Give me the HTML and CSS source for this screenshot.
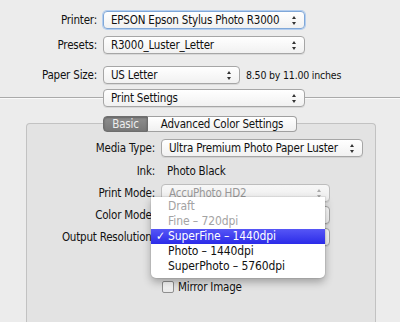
FILE: index.html
```html
<!DOCTYPE html>
<html>
<head>
	<meta charset="UTF-8">
	<title>Print</title>
	<link rel="stylesheet" href="styles.css">
</head>
<body>
	<div class="sheet">
		<div class="row first">
			<div class="label">Printer:</div>
			<div class="popup wide focus"><span>EPSON Epson Stylus Photo R3000</span><i class="arrows"></i></div>
		</div>
		<div class="row presets">
			<div class="label">Presets:</div>
			<div class="popup wide"><span>R3000_Luster_Letter</span><i class="arrows"></i></div>
		</div>
		<div class="row paper">
			<div class="label">Paper Size:</div>
			<div class="popup narrow"><span>US Letter</span><i class="arrows"></i></div>
			<div class="note">8.50 by 11.00 inches</div>
		</div>
		<div class="divider">
			<div class="rule left"></div>
			<div class="popup wide"><span>Print Settings</span><i class="arrows"></i></div>
			<div class="rule right"></div>
		</div>
	</div>
	<div class="pane">
		<div class="tabs">
			<div class="tab selected">Basic</div>
			<div class="tab">Advanced Color Settings</div>
		</div>
		<div class="prow media-row">
			<div class="plabel">Media Type:</div>
			<div class="popup media"><span>Ultra Premium Photo Paper Luster</span><i class="arrows"></i></div>
		</div>
		<div class="prow ink">
			<div class="plabel">Ink:</div>
			<div class="value">Photo Black</div>
		</div>
		<div class="prow mode-row">
			<div class="plabel">Print Mode:</div>
			<div class="popup mode disabled"><span>AccuPhoto HD2</span><i class="arrows"></i></div>
		</div>
		<div class="prow">
			<div class="plabel">Color Mode:</div>
			<div class="popup mode"><span></span><i class="arrows"></i></div>
		</div>
		<div class="prow">
			<div class="plabel">Output Resolution:</div>
			<div class="popup mode"><span></span><i class="arrows"></i></div>
		</div>
		<div class="prow check">
			<div class="plabel"></div>
			<div class="box"></div>
			<div class="value">Mirror Image</div>
		</div>

		<div class="menu">
			<div class="item off">Draft</div>
			<div class="item off">Fine – 720dpi</div>
			<div class="item on"><b class="tick">✓</b>SuperFine – 1440dpi</div>
			<div class="item">Photo – 1440dpi</div>
			<div class="item">SuperPhoto – 5760dpi</div>
		</div>
	</div>
</body>
</html>
```

FILE: styles.css
```css
body {
	margin: 0;
	padding: 0;
	background-color: #ececec;
	font-family: "DejaVu Sans Condensed", "DejaVu Sans", sans-serif;
	font-size: 11.5px;
	letter-spacing: -0.2px;
	color: #111;
	overflow: hidden;
	height: 322px;
}
.sheet {
	padding-top: 11px;
}
.row {
	display: flex;
	align-items: center;
	height: 18px;
}
.row.presets {
	margin-top: 7px;
}
.row.paper {
	margin-top: 12px;
	margin-bottom: 5px;
}
.label {
	width: 97px;
	text-align: right;
	padding-right: 6px;
}
.popup {
	box-sizing: border-box;
	height: 18px;
	display: flex;
	align-items: center;
	justify-content: space-between;
	padding: 0 7px 0 7px;
	border: 1px solid #a6a6a6;
	border-radius: 4px;
	background: linear-gradient(#ffffff, #f1f1f1);
	box-shadow: 0 1px 0 rgba(0,0,0,0.08);
	white-space: nowrap;
}
.popup.wide {
	width: 202px;
}
.popup.narrow {
	width: 137px;
}
.popup.focus {
	border-color: #7fa7d8;
	box-shadow: 0 0 0 1px #b3cdee;
}
.arrows {
	display: block;
	width: 5px;
	height: 9px;
	position: relative;
	flex: none;
}
.arrows::before,
.arrows::after {
	content: "";
	position: absolute;
	left: 0;
	border-left: 2.5px solid transparent;
	border-right: 2.5px solid transparent;
}
.arrows::before {
	top: 0;
	border-bottom: 3px solid #333;
}
.arrows::after {
	bottom: 0;
	border-top: 3px solid #333;
}
.note {
	padding-left: 6px;
	font-size: 10.5px;
}
.divider {
	display: flex;
	align-items: center;
	height: 18px;
}
.rule {
	height: 1px;
	background-color: #aaa;
	border-bottom: 1px solid #fafafa;
	flex: 1;
	margin-top: -1px;
}
.rule.left {
	flex: none;
	width: 103px;
}
.pane {
	position: relative;
	box-sizing: border-box;
	margin: 16px 0 0 26px;
	width: 350px;
	height: 199px;
	border: 1px solid #c2c2c2;
	border-bottom: none;
	border-radius: 4px 4px 0 0;
	background-color: #e3e3e3;
}
.tabs {
	display: flex;
	margin: -8px 0 0 76px;
	height: 16px;
}
.tab {
	box-sizing: border-box;
	height: 16px;
	line-height: 14px;
	padding: 0 4px;
	border: 1px solid #a0a0a0;
	background: linear-gradient(#ffffff, #f0f0f0);
	white-space: nowrap;
}
.tab.selected {
	width: 45px;
	text-align: center;
	color: #eee;
	background: linear-gradient(#8e8e8e, #787878);
	border-color: #6e6e6e;
	border-radius: 4px 0 0 4px;
	box-shadow: inset 0 1px 2px rgba(0,0,0,0.3);
}
.tab:last-child {
	width: 149px;
	text-align: center;
	border-left: none;
	border-radius: 0 4px 4px 0;
}
.prow {
	display: flex;
	align-items: center;
	height: 18px;
	margin-top: 4px;
}
.prow.media-row {
	margin-top: 7px;
}
.prow.ink {
	margin-top: 7px;
	height: 14px;
}
.prow.mode-row {
	margin-top: 6px;
}
.plabel {
	width: 128px;
	text-align: right;
	padding-right: 6px;
	white-space: nowrap;
}
.popup.media {
	width: 202px;
}
.popup.mode {
	width: 169px;
}
.popup.disabled {
	color: #999;
	border-color: #bdbdbd;
	background: linear-gradient(#f7f7f7, #eeeeee);
}
.popup.disabled .arrows::before {
	border-bottom-color: #aaa;
}
.popup.disabled .arrows::after {
	border-top-color: #aaa;
}
.ink .value {
	padding-left: 6px;
}
.prow.check {
	margin-top: 34px;
	height: 14px;
}
.check .plabel {
	width: 129px;
	padding-right: 6px;
}
.box {
	box-sizing: border-box;
	width: 12px;
	height: 12px;
	border: 1px solid #8f8f8f;
	border-radius: 2px;
	background: linear-gradient(#fefefe, #e9e9e9);
	margin-right: 4px;
}
.menu {
	position: absolute;
	left: 124px;
	top: 73px;
	width: 174px;
	padding: 2px 0 4px;
	background-color: #fff;
	border-radius: 0 0 5px 5px;
	box-shadow: 0 4px 9px rgba(0,0,0,0.3), 0 0 0 1px rgba(0,0,0,0.06);
	font-size: 12px;
	letter-spacing: -0.1px;
}
.item {
	height: 15px;
	line-height: 15px;
	padding-left: 17px;
	position: relative;
	white-space: nowrap;
}
.item.off {
	color: #a3a3a3;
}
.item.on {
	color: #fff;
	background: linear-gradient(#5656f6, #2b2be8);
}
.tick {
	position: absolute;
	left: 5px;
	font-weight: bold;
}
```
